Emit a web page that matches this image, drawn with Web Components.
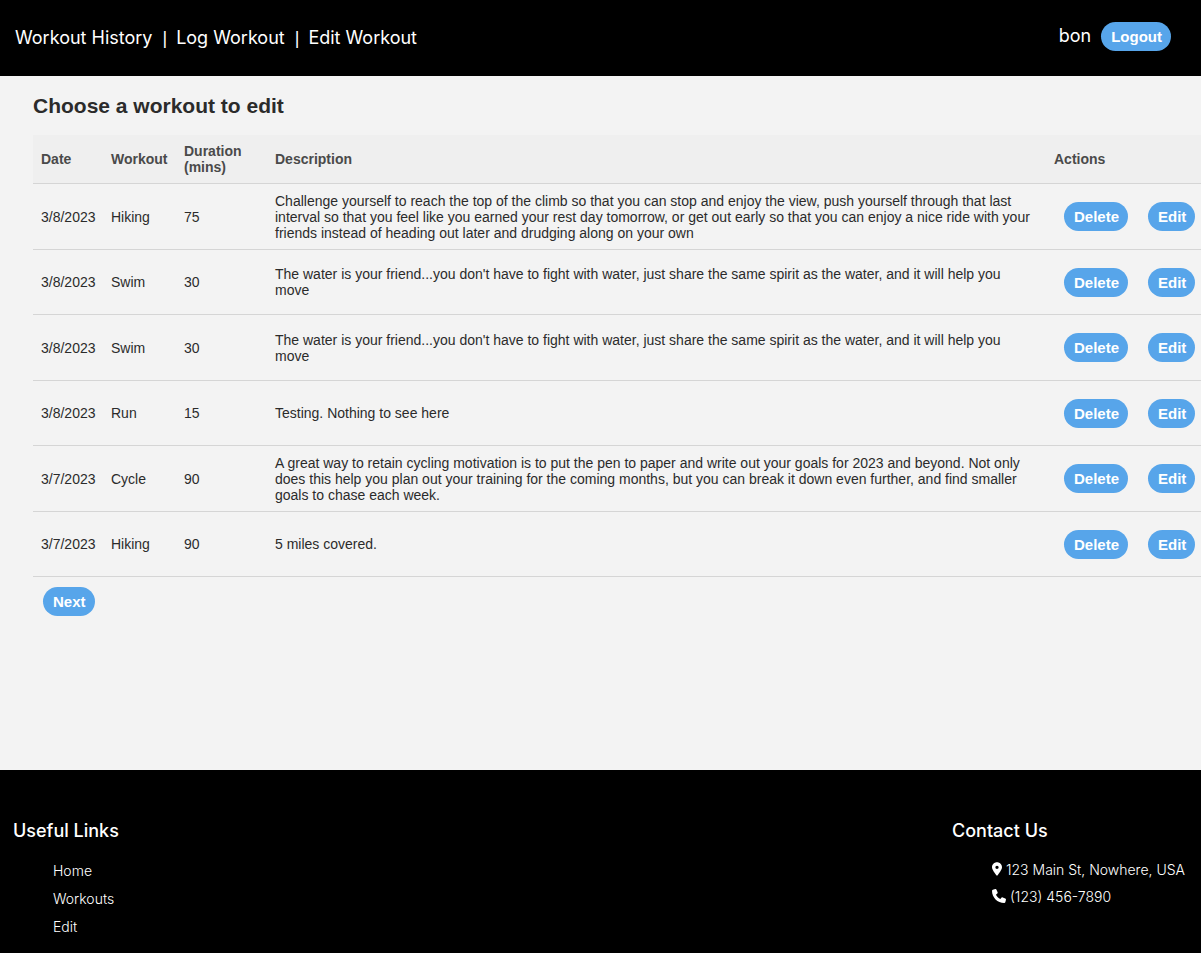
<!DOCTYPE html>
<html lang="en">
<head>
<meta charset="utf-8">
<meta name="viewport" content="width=device-width, initial-scale=1">
<title>Edit Workout</title>
<style>
  html, body { margin: 0; min-height: 100%; }
  body {
    --bar: #000;
    --page: #f3f3f3;
    --head: #efefef;
    --line: #d5d5d5;
    --accent: #57a5ea;
    background: var(--page);
    color: #2b2b2b;
    font-family: "Liberation Sans", Arial, sans-serif;
    overflow-x: hidden;
  }
</style>
</head>
<body>
<workout-app></workout-app>

<template id="app-tpl">
  <style>
    :host { display: flex; flex-direction: column; min-height: 100vh; }
    main { flex: 1; padding: 16px 0 144px 33px; }
    h1 { margin: 0 0 15px; font-size: 21px; line-height: 28px; font-weight: 700; }
    .pager { padding: 10px; display: flex; }
  </style>
  <site-header user="bon">
    <a href="#history">Workout History</a>
    <a href="#log">Log Workout</a>
    <a href="#edit">Edit Workout</a>
  </site-header>
  <main>
    <h1>Choose a workout to edit</h1>
    <workout-table></workout-table>
    <div class="pager"><pill-button>Next</pill-button></div>
  </main>
  <site-footer></site-footer>
</template>

<template id="header-tpl">
  <style>
    :host {
      display: block; background: var(--bar); color: #fff;
      font: 400 18px/28px Inter, sans-serif;
    }
    header { display: flex; justify-content: space-between; align-items: flex-start; padding: 22px 30px 24px 15px; }
    nav { display: flex; padding-top: 2px; }
    ::slotted(a) { color: #fff; text-decoration: none; line-height: 28px; }
    ::slotted(a:not(:first-child))::before { content: "|"; margin: 0 9px 0 10px; font-family: "Liberation Sans", Arial, sans-serif; }
    .account { display: flex; gap: 10px; }
  </style>
  <header>
    <nav aria-label="Main"><slot></slot></nav>
    <div class="account"><span class="user"></span><pill-button>Logout</pill-button></div>
  </header>
</template>

<template id="button-tpl">
  <style>
    :host { display: inline-flex; }
    button {
      border: 0; border-radius: 15px; padding: 6px 9px 6px 10px; background: var(--accent);
      color: #fff; font: 700 15px/17px "Liberation Sans", Arial, sans-serif; cursor: pointer;
    }
  </style>
  <button type="button"><slot></slot></button>
</template>

<template id="table-tpl">
  <style>
    :host { display: block; font-size: 14px; line-height: 16px; }
    table { width: 100%; table-layout: fixed; border-spacing: 0; }
    .date { width: 70px; }
    .kind { width: 73px; }
    .mins { width: 91px; }
    .acts { width: 155px; }
    th, td { box-sizing: border-box; padding: 8px; text-align: left; vertical-align: middle; border-bottom: 1px solid var(--line); overflow-wrap: break-word; }
    th { background: var(--head); color: #4a4a4a; }
    td { height: 65px; }
    tr:nth-child(odd) td { height: 66px; }
    td:first-child { white-space: nowrap; }
    td:nth-child(4) { padding-right: 16px; }
    td:last-child { padding: 0 6px 0 18px; }
    .actions { display: flex; gap: 20px; }
  </style>
  <table>
    <colgroup><col class="date"><col class="kind"><col class="mins"><col><col class="acts"></colgroup>
    <thead><tr>
      <th scope="col">Date</th><th scope="col">Workout</th><th scope="col">Duration (mins)</th>
      <th scope="col">Description</th><th scope="col">Actions</th>
    </tr></thead>
    <tbody></tbody>
  </table>
</template>

<template id="footer-tpl">
  <style>
    :host { display: block; background: var(--bar); color: #fff; font-family: Inter, sans-serif; }
    footer { display: flex; justify-content: space-between; padding: 47px 16px 12px 13px; }
    a { color: #fff; text-decoration: none; }
    .contact { display: flex; gap: 4px; height: 27px; line-height: 26px; }
    svg { display: block; fill: #fff; height: 14px; margin-top: 5px; }
  </style>
  <footer>
    <footer-group heading="Useful Links">
      <a href="#home">Home</a>
      <a href="#workouts">Workouts</a>
      <a href="#edit">Edit</a>
    </footer-group>
    <footer-group heading="Contact Us">
      <span class="contact">
        <svg viewBox="0 0 384 512" width="10" aria-hidden="true"><path d="M215.700 499.200C267 435 384 279.400 384 192C384 86 298 0 192 0S0 86 0 192c0 87.400 117 243 168.300 307.200c12.300 15.300 35.100 15.300 47.400 0zM192 128a64 64 0 1 1 0 128 64 64 0 1 1 0-128z"/></svg>
        <span>123 Main St, Nowhere, USA</span>
      </span>
      <span class="contact">
        <svg viewBox="0 0 512 512" width="14" aria-hidden="true"><path d="M164.900 24.600c-7.700-18.600-28-28.500-47.400-23.200l-88 24C12.100 30.200 0 46 0 64C0 311.400 200.600 512 448 512c18 0 33.800-12.100 38.600-29.500l24-88c5.300-19.400-4.600-39.700-23.200-47.400l-96-40c-16.300-6.800-35.200-2.100-46.300 11.600L304.700 368C234.300 334.700 177.300 277.700 144 207.300L193.300 167c13.700-11.200 18.400-30 11.600-46.300l-40-96z"/></svg>
        <span>(123) 456-7890</span>
      </span>
    </footer-group>
  </footer>
</template>

<template id="group-tpl">
  <style>
    :host { display: block; }
    h2 { margin: 0 0 12px; font-size: 18px; line-height: 28px; font-weight: 500; }
    .items { display: grid; padding-left: 40px; font-size: 14px; line-height: 28px; font-weight: 300; }
  </style>
  <h2></h2>
  <div class="items"><slot></slot></div>
</template>

<script>
  class TemplateElement extends HTMLElement {
    constructor() {
      super();
      const tpl = document.getElementById(this.constructor.template);
      this.attachShadow({ mode: "open" }).append(tpl.content.cloneNode(true));
    }
  }

  class PillButton extends TemplateElement {
    static template = "button-tpl";
  }

  class SiteHeader extends TemplateElement {
    static template = "header-tpl";
    connectedCallback() {
      this.shadowRoot.querySelector(".user").textContent = this.getAttribute("user");
    }
  }

  class FooterGroup extends TemplateElement {
    static template = "group-tpl";
    connectedCallback() {
      this.shadowRoot.querySelector("h2").textContent = this.getAttribute("heading");
    }
  }

  class SiteFooter extends TemplateElement {
    static template = "footer-tpl";
  }

  const WATER = "The water is your friend...you don't have to fight with water, just share the same spirit as the water, and it will help you move";
  const WORKOUTS = [
    ["3/8/2023", "Hiking", "75", "Challenge yourself to reach the top of the climb so that you can stop and enjoy the view, push yourself through that last interval so that you feel like you earned your rest day tomorrow, or get out early so that you can enjoy a nice ride with your friends instead of heading out later and drudging along on your own"],
    ["3/8/2023", "Swim", "30", WATER],
    ["3/8/2023", "Swim", "30", WATER],
    ["3/8/2023", "Run", "15", "Testing. Nothing to see here"],
    ["3/7/2023", "Cycle", "90", "A great way to retain cycling motivation is to put the pen to paper and write out your goals for 2023 and beyond. Not only does this help you plan out your training for the coming months, but you can break it down even further, and find smaller goals to chase each week."],
    ["3/7/2023", "Hiking", "90", "5 miles covered."],
  ];

  class WorkoutTable extends TemplateElement {
    static template = "table-tpl";
    connectedCallback() {
      const body = this.shadowRoot.querySelector("tbody");
      body.replaceChildren();
      for (const workout of WORKOUTS) {
        const row = body.insertRow();
        for (const value of workout) row.insertCell().textContent = value;
        row.insertCell().innerHTML =
          '<div class="actions"><pill-button>Delete</pill-button><pill-button>Edit</pill-button></div>';
      }
    }
  }

  class WorkoutApp extends TemplateElement {
    static template = "app-tpl";
  }

  customElements.define("pill-button", PillButton);
  customElements.define("site-header", SiteHeader);
  customElements.define("footer-group", FooterGroup);
  customElements.define("site-footer", SiteFooter);
  customElements.define("workout-table", WorkoutTable);
  customElements.define("workout-app", WorkoutApp);
</script>
</body>
</html>
